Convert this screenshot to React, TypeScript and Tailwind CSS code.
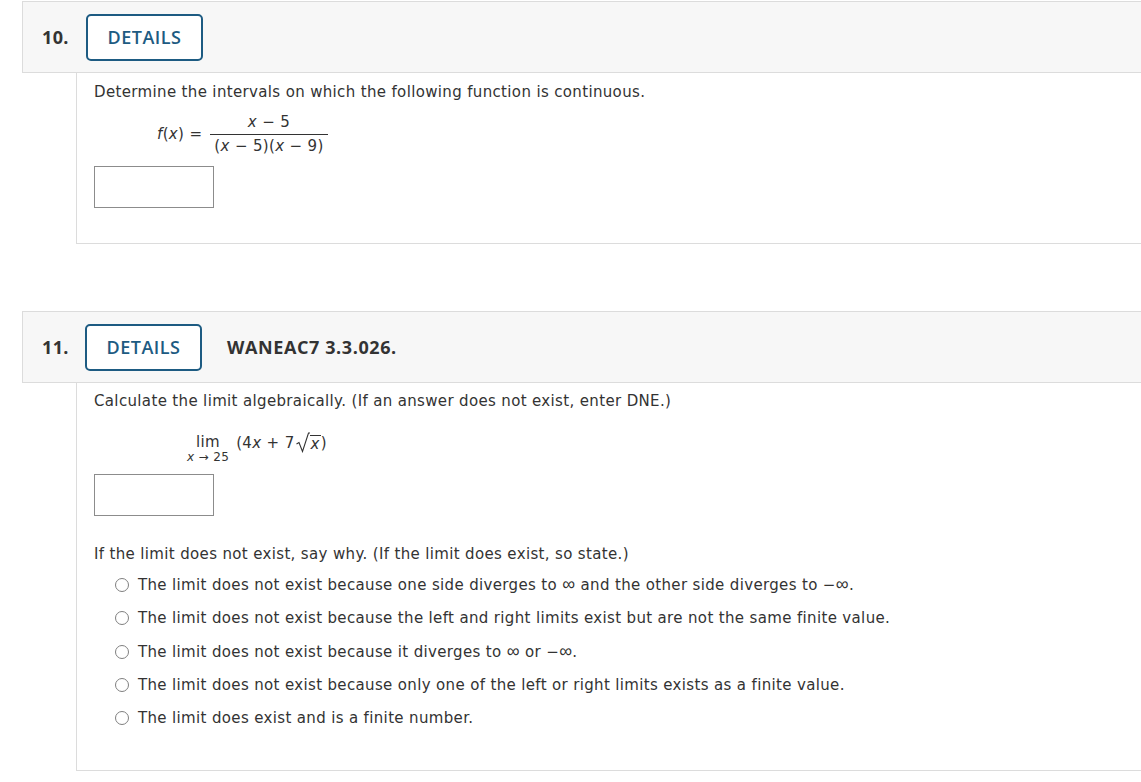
import React from "react";

const bodyFont = "font-['DejaVu_Sans','Verdana',sans-serif]";
const headFont = "font-['Open_Sans','Liberation_Sans',sans-serif]";

const Header: React.FC<{ num: string; code?: string; numWidth: string }> = ({ num, code, numWidth }) => (
  <div className="flex h-[72px] items-center border border-r-0 border-[#dcdcdc] bg-[#f7f7f7] pl-[19px]">
    <span className={`${headFont} ${numWidth} text-[18px] font-bold text-[#333]`}>
      {num}
    </span>
    <button
      className={`${headFont} flex h-[47px] w-[117px] items-center justify-center rounded-[5px] border-2 border-[#1d5b82] bg-white text-[18px] font-semibold tracking-[0.5px] text-[#1d5b82]`}
    >
      DETAILS
    </button>
    {code && (
      <span className={`${headFont} ml-[25px] text-[18px] font-bold tracking-[0.6px] text-[#333]`}>
        {code}
      </span>
    )}
  </div>
);

const AnswerBox: React.FC<{ className?: string }> = ({ className }) => (
  <div className={`h-[42px] w-[120px] border border-[#8c8c8c] bg-white ${className ?? ""}`} />
);

const Radio: React.FC<{ children: React.ReactNode }> = ({ children }) => (
  <label className="flex items-center gap-[9px] leading-5">
    <span className="h-[14px] w-[14px] shrink-0 rounded-full border border-[#808080] bg-white" />
    <span>{children}</span>
  </label>
);

const X = () => <i className="italic">x</i>;
const Inf = () => (
  <span className="font-['Liberation_Sans',sans-serif] text-[18px] leading-none">∞</span>
);

const options = [
  <>The limit does not exist because one side diverges to <Inf /> and the other side diverges to −<Inf />.</>,
  <>The limit does not exist because the left and right limits exist but are not the same finite value.</>,
  <>The limit does not exist because it diverges to <Inf /> or −<Inf />.</>,
  <>The limit does not exist because only one of the left or right limits exists as a finite value.</>,
  <>The limit does exist and is a finite number.</>,
];

export default function App() {
  return (
    <div className={`min-h-screen bg-white pl-[22px] pt-px ${bodyFont} text-[15px] tracking-[0.35px] text-[#333]`}>
      {/* Question 10 */}
      <Header num="10." numWidth="w-[44px]" />
      <div className="ml-[54px] border-b border-l border-[#dcdcdc] pb-[35px] pl-[17px] pt-[9px]">
        <p className="leading-5">
          Determine the intervals on which the following function is continuous.
        </p>
        <div className="ml-[63px] mt-[9px] flex items-center">
          <span className="mr-[8px]">
            <i>f</i>(<X />) =
          </span>
          <span className="inline-flex flex-col items-center">
            <span className="px-[4px] leading-[23px]">
              <X /> − 5
            </span>
            <span className="border-t border-[#333] px-[4px] leading-[22px]">
              (<X /> − 5)(<X /> − 9)
            </span>
          </span>
        </div>
        <AnswerBox className="mt-[9px]" />
      </div>

      {/* Question 11 */}
      <div className="mt-[67px]">
        <Header num="11." code="WANEAC7 3.3.026." numWidth="w-[43px]" />
      </div>
      <div className="ml-[54px] border-b border-l border-[#dcdcdc] pb-[42px] pl-[17px] pt-[8px]">
        <p className="leading-5">
          Calculate the limit algebraically. (If an answer does not exist, enter DNE.)
        </p>
        <div className="ml-[93px] mt-[21px] flex items-start">
          <span className="inline-flex flex-col items-center">
            <span className="leading-5">lim</span>
            <span className="-mt-[2px] text-[12px] leading-[14px]">
              <X /> → 25
            </span>
          </span>
          <span className="ml-[7px] leading-5">
            (4<X /> + 7
            <svg width="14" height="21" viewBox="0 0 14 21" className="ml-[1px] inline-block align-[-5px]">
              <path d="M0.5 12 L3 10.5 L6.5 19.5 L12.5 1 L14 1" fill="none" stroke="#333" strokeWidth="1.1" />
            </svg>
            <span className="inline-block border-t border-[#333] px-[1px] align-[-1px] leading-[17px]">
              <X />
            </span>
            )
          </span>
        </div>
        <AnswerBox className="mt-[10px]" />
        <p className="mt-[28px] leading-5">
          If the limit does not exist, say why. (If the limit does exist, so state.)
        </p>
        <div className="ml-[21px] mt-[11px] flex flex-col gap-[13.3px]">
          {options.map((o, i) => (
            <Radio key={i}>{o}</Radio>
          ))}
        </div>
      </div>
    </div>
  );
}
